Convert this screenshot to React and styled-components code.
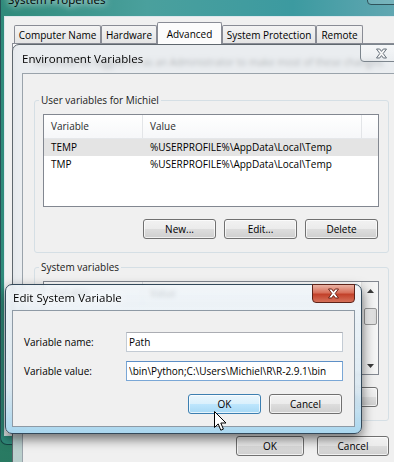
import React from "react"
import styled, { createGlobalStyle, css } from "styled-components"

const GlobalStyle = createGlobalStyle`
  html, body {
    margin: 0;
    padding: 0;
    width: 394px;
    height: 462px;
    overflow: hidden;
  }
  body {
    font-family: "Open Sans", "Noto Sans", sans-serif;
    font-size: 10px;
    color: #000;
  }
`

const Desktop = styled.div`
  position: relative;
  width: 394px;
  height: 462px;
  overflow: hidden;
  background: linear-gradient(160deg, #2b8068 0%, #2f8a70 50%, #236b55 100%);
`

const frames = {
  sys: css`
    background: linear-gradient(90deg, #2f8a7a 0%, #4aa09d 35%, #3c9aa0 70%, #6aaab6 100%);
    border: 1px solid rgba(10, 40, 45, 0.7);
    padding: 0 3px 8px;
  `,
  inactive: css`
    background: rgba(228, 232, 236, 0.78);
    backdrop-filter: blur(2px);
    border: 1px solid #5f676e;
    padding: 0 9px 9px;
  `,
  active: css`
    background: linear-gradient(
      180deg,
      rgba(238, 243, 247, 0.8) 0%,
      rgba(216, 231, 241, 0.86) 70%,
      rgba(166, 213, 238, 0.96) 100%
    );
    backdrop-filter: blur(2px);
    border: 1px solid #34495a;
    box-shadow: 0 5px 12px rgba(0, 0, 0, 0.55);
    padding: 0 6px 6px;
  `,
}

// windows sit on a free desktop, so they are placed by coordinates
const Window = styled.div`
  position: absolute;
  left: ${(p) => p.$left}px;
  top: ${(p) => p.$top}px;
  width: ${(p) => p.$width}px;
  height: ${(p) => p.$height}px;
  box-sizing: border-box;
  border-radius: 7px;
  display: flex;
  flex-direction: column;
  ${(p) => frames[p.$kind]}
`

const TitleBar = styled.div`
  flex: none;
  display: flex;
  align-items: center;
  box-sizing: border-box;
  height: ${(p) => p.$h}px;
  padding-left: ${(p) => p.$pad}px;
  padding-bottom: ${(p) => p.$lift || 0}px;
`

const Title = styled.span`
  font-size: 11.5px;
  color: #000;
  white-space: nowrap;
  text-shadow: ${(p) =>
    p.$glow ? "0 0 6px #fff, 0 0 10px rgba(255,255,255,0.8)" : "none"};
`

const closeKinds = {
  red: css`
    border: 1px solid #5e2319;
    background: linear-gradient(180deg, #eab3a4 0%, #d8705b 45%, #c2412a 55%, #d6715a 100%);
  `,
  idle: css`
    border: 1px solid #7c858d;
    background: linear-gradient(180deg, rgba(255, 255, 255, 0.55), rgba(235, 238, 241, 0.4));
  `,
  ghost: css`
    border: 1px solid #2f535b;
    background: rgba(255, 255, 255, 0.15);
  `,
}

const CloseButton = styled.div`
  flex: none;
  align-self: flex-start;
  margin: -1px ${(p) => p.$right}px 0 auto;
  width: 43px;
  height: ${(p) => p.$h}px;
  box-sizing: border-box;
  border-radius: 0 0 4px 4px;
  display: flex;
  align-items: center;
  justify-content: center;
  ${(p) => closeKinds[p.$kind]}
`

const Client = styled.div`
  flex: 1;
  min-height: 0;
  background: #f0f0f0;
  border: 1px solid ${(p) => p.$border};
  padding: ${(p) => p.$pad};
`

/* System Properties */

const TabStrip = styled.div`
  display: flex;
  align-items: flex-start;
  height: 21px;
`

const Tab = styled.div`
  box-sizing: border-box;
  width: ${(p) => p.$w}px;
  height: ${(p) => (p.$active ? 22 : 18)}px;
  margin-top: ${(p) => (p.$active ? 0 : 3)}px;
  border: 1px solid #898c95;
  border-bottom: none;
  border-radius: 2px 2px 0 0;
  background: ${(p) => (p.$active ? "#fcfcfc" : "linear-gradient(#f4f4f4, #e4e4e4)")};
  display: flex;
  align-items: center;
  justify-content: center;
  white-space: nowrap;
  position: relative;
  z-index: ${(p) => (p.$active ? 1 : 0)};
`

const TabPanel = styled.div`
  margin-left: -2px;
  height: 380px;
  border: 1px solid #898c95;
  background: #fcfcfc;
  padding: 11px 0 0 20px;
  line-height: 14px;
  white-space: nowrap;
`

/* Environment Variables */

const Group = styled.fieldset`
  margin: 0;
  width: 355px;
  min-inline-size: 0;
  box-sizing: border-box;
  border: 1px solid #d5dfe5;
  border-radius: 3px;
  padding: 7px 9px 13px 8px;

  & + & {
    margin-top: 7px;
  }
`

const Legend = styled.legend`
  padding: 0 2px;
  margin-left: -4px;
  line-height: 14px;
  color: #1a1a1a;
`

const ListBox = styled.div`
  display: flex;
  box-sizing: border-box;
  height: ${(p) => p.$h}px;
  border: 1px solid #828790;
  background: #fff;
  overflow: hidden;
`

const ListBody = styled.div`
  flex: 1;
  min-width: 0;
`

const HeaderRow = styled.div`
  display: grid;
  grid-template-columns: 99px 219px 1fr;
  height: 23px;
  border-bottom: 1px solid #e5e7ea;
  background: linear-gradient(#ffffff, #f6f7f9);
`

const HeaderCell = styled.div`
  padding-left: 7px;
  line-height: 23px;
  color: #2b2b2b;
  border-right: 1px solid ${(p) => (p.$last ? "transparent" : "#e3e5e8")};
`

const Row = styled.div`
  display: grid;
  grid-template-columns: 99px 219px 1fr;
  height: 17px;
  line-height: 17px;
  background: ${(p) => (p.$selected ? "#e4e4e4" : "transparent")};
`

const Cell = styled.div`
  padding-left: 7px;
  white-space: nowrap;
  overflow: hidden;
`

const ScrollBar = styled.div`
  flex: none;
  width: 16px;
  display: flex;
  flex-direction: column;
  border-left: 1px solid #e2e2e2;
  background: linear-gradient(90deg, #ebebeb, #f6f6f6);
`

const ScrollArrow = styled.div`
  height: 17px;
  display: flex;
  align-items: center;
  justify-content: center;
`

const Thumb = styled.div`
  margin: 9px 1px 0 2px;
  height: 15px;
  border: 1px solid #979797;
  border-radius: 2px;
  background: linear-gradient(90deg, #f3f3f3, #d9d9d9);
`

const Track = styled.div`
  flex: 1;
`

const ButtonRow = styled.div`
  display: flex;
  justify-content: flex-end;
  gap: ${(p) => p.$gap}px;
  margin-top: ${(p) => p.$top}px;
  padding-right: ${(p) => p.$right}px;
`

const Button = styled.button`
  box-sizing: border-box;
  width: ${(p) => p.$w}px;
  height: 20px;
  padding: 0;
  font: inherit;
  font-size: 10px;
  color: #000;
  border: 1px solid ${(p) => (p.$hot ? "#3c7fb1" : "#707070")};
  border-radius: 3px;
  background: ${(p) =>
    p.$hot
      ? "linear-gradient(#eaf6fd 0%, #d9f0fc 50%, #bee6fd 50%, #a7d9f5 100%)"
      : "linear-gradient(#f2f2f2 0%, #ebebeb 50%, #dddddd 50%, #cfcfcf 100%)"};
  box-shadow: inset 0 0 0 1px rgba(255, 255, 255, 0.7);
`

const Footer = styled.div`
  width: 355px;
  display: flex;
  justify-content: flex-end;
  gap: 13px;
  margin-top: 15px;
`

/* Edit System Variable */

const Form = styled.div`
  display: grid;
  grid-template-columns: 102px 217px;
  row-gap: 9px;
  align-items: center;
  padding: 21px 0 0 11px;
`

const Label = styled.label`
  white-space: nowrap;
`

const Input = styled.input`
  box-sizing: border-box;
  width: 217px;
  height: 20px;
  margin: 0;
  padding: 0 2px;
  font: inherit;
  font-size: 10px;
  color: #000;
  background: #fff;
  border: 1px solid ${(p) => (p.$focus ? "#7aa7d6" : "#c3cbd4")};
  border-top-color: ${(p) => (p.$focus ? "#5d8fc6" : "#abadb3")};
  outline: none;
`

const Pointer = styled.svg`
  position: absolute;
  left: 214px;
  top: 411px;
`

const XGlyph = ({ fill, stroke }) => (
  <svg width="13" height="11" viewBox="0 0 13 11">
    <path
      d="M1.5 1h3.2l1.8 2.4L8.3 1h3.2L8.2 5.5l3.3 4.5H8.3L6.5 7.6 4.7 10H1.5l3.3-4.5z"
      fill={fill}
      stroke={stroke}
      strokeWidth="1"
      strokeLinejoin="round"
    />
  </svg>
)

const Arrow = ({ up }) => (
  <svg width="7" height="4" viewBox="0 0 7 4">
    <path d={up ? "M0 4L3.5 0 7 4z" : "M0 0h7L3.5 4z"} fill="#3a3a3a" />
  </svg>
)

const VarList = ({ height, rows, scroll }) => (
  <ListBox $h={height}>
    <ListBody>
      <HeaderRow>
        <HeaderCell>Variable</HeaderCell>
        <HeaderCell>Value</HeaderCell>
        <HeaderCell $last />
      </HeaderRow>
      {rows.map(([name, value], i) => (
        <Row key={name} $selected={i === 0}>
          <Cell>{name}</Cell>
          <Cell>{value}</Cell>
          <Cell />
        </Row>
      ))}
    </ListBody>
    {scroll && (
      <ScrollBar>
        <ScrollArrow>
          <Arrow up />
        </ScrollArrow>
        <Thumb />
        <Track />
        <ScrollArrow>
          <Arrow />
        </ScrollArrow>
      </ScrollBar>
    )}
  </ListBox>
)

const userVars = [
  ["TEMP", "%USERPROFILE%\\AppData\\Local\\Temp"],
  ["TMP", "%USERPROFILE%\\AppData\\Local\\Temp"],
]

const tabs = [
  ["Computer Name", 87],
  ["Hardware", 56],
  ["Advanced", 65],
  ["System Protection", 94],
  ["Remote", 47],
]

export default function App() {
  return (
    <>
      <GlobalStyle />
      <Desktop>
        <Window $kind="sys" $left={0} $top={-14} $width={419} $height={459}>
          <TitleBar $h={29} $pad={4} $lift={5}>
            <Title $glow>System Properties</Title>
            <CloseButton $kind="ghost" $h={19} $right={5} />
          </TitleBar>
          <Client $border="#dce7ec" $pad="5px 0 0 9px">
            <TabStrip>
              {tabs.map(([label, w]) => (
                <Tab key={label} $w={w} $active={label === "Advanced"}>
                  {label}
                </Tab>
              ))}
            </TabStrip>
            <TabPanel>
              You must be logged on as an Administrator to make most of these changes.
            </TabPanel>
          </Client>
        </Window>

        <Window $kind="inactive" $left={12} $top={44} $width={399} $height={450}>
          <TitleBar $h={28} $pad={0} $lift={2}>
            <Title>Environment Variables</Title>
            <CloseButton $kind="idle" $h={18} $right={-2}>
              <XGlyph fill="#f7f7f7" stroke="#66707a" />
            </CloseButton>
          </TitleBar>
          <Client $border="#9aa3ab" $pad="19px 0 0 11px">
            <Group>
              <Legend>User variables for Michiel</Legend>
              <VarList height={93} rows={userVars} />
              <ButtonRow $gap={8} $top={12} $right={1}>
                <Button $w={73}>New...</Button>
                <Button $w={73}>Edit...</Button>
                <Button $w={73}>Delete</Button>
              </ButtonRow>
            </Group>
            <Group>
              <Legend>System variables</Legend>
              <VarList height={94} rows={[]} scroll />
              <ButtonRow $gap={8} $top={12} $right={1}>
                <Button $w={73}>New...</Button>
                <Button $w={73}>Edit...</Button>
                <Button $w={73}>Delete</Button>
              </ButtonRow>
            </Group>
            <Footer>
              <Button $w={68}>OK</Button>
              <Button $w={72}>Cancel</Button>
            </Footer>
          </Client>
        </Window>

        <Window $kind="active" $left={5} $top={284} $width={357} $height={150}>
          <TitleBar $h={25} $pad={1} $lift={1}>
            <Title $glow>Edit System Variable</Title>
            <CloseButton $kind="red" $h={19} $right={0}>
              <XGlyph fill="#ffffff" stroke="#6a2216" />
            </CloseButton>
          </TitleBar>
          <Client $border="#8e9aa5" $pad="0">
            <Form>
              <Label>Variable name:</Label>
              <Input readOnly value="Path" />
              <Label>Variable value:</Label>
              <Input $focus readOnly value={"\\bin\\Python;C:\\Users\\Michiel\\R\\R-2.9.1\\bin"} />
            </Form>
            <ButtonRow $gap={8} $top={13} $right={12}>
              <Button $w={73} $hot>
                OK
              </Button>
              <Button $w={73}>Cancel</Button>
            </ButtonRow>
          </Client>
        </Window>

        <Pointer width="13" height="21" viewBox="0 0 13 21">
          <path
            d="M0.5 0.5v16l3.7-3.6 2.6 6.3 2.6-1.1-2.6-6.1h5.2z"
            fill="#fff"
            stroke="#000"
            strokeWidth="1"
            strokeLinejoin="round"
          />
        </Pointer>
      </Desktop>
    </>
  )
}
